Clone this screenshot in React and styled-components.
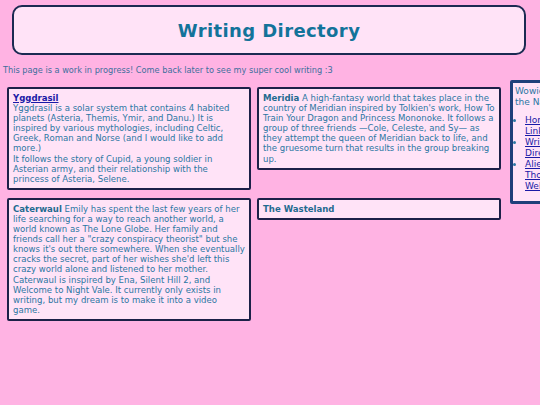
import React from 'react';
import styled, { createGlobalStyle } from 'styled-components';

const GlobalStyle = createGlobalStyle`
  html, body {
    margin: 0;
    padding: 0;
    overflow: hidden;
  }
  body {
    background-color: #ffb3e3;
    font-family: "DejaVu Sans", Verdana, sans-serif;
    color: #2b77a3;
  }
`;

const Page = styled.div`
  padding: 5px 0 0 3px;
  width: 600px;
`;

const Header = styled.header`
  margin: 0 0 0 9px;
  width: 510px;
  height: 46px;
  display: flex;
  align-items: center;
  justify-content: center;
  background-color: #ffe3f7;
  border: 2.5px solid #1b2a52;
  border-radius: 10px;

  h1 {
    margin: 0;
    font-size: 18px;
    font-weight: bold;
    letter-spacing: 0.4px;
    color: #13739a;
  }
`;

const Intro = styled.p`
  margin: 10px 0 0 0;
  font-size: 8.2px;
  line-height: 10px;
  color: #3d6f9c;
`;

const Main = styled.div`
  display: flex;
  align-items: flex-start;
  gap: 9px;
  margin-top: 5px;
`;

const Grid = styled.div`
  display: grid;
  grid-template-columns: 244px 244px;
  column-gap: 6px;
  row-gap: 8px;
  align-items: start;
  margin: 7px 0 0 4px;
`;

const Card = styled.div`
  background-color: #ffe3f7;
  border: 2px solid #1c2048;
  border-radius: 2px;
  padding: 4px 3px 4px 4px;
  font-size: 8.55px;
  line-height: 10.1px;

  p {
    margin: 0;
  }
`;

const Label = styled.b`
  color: #1f6b90;
`;

const TitleLink = styled.a`
  display: block;
  font-weight: bold;
  color: #1a1aa6;
  text-decoration: underline;
`;

const Aside = styled.aside`
  flex: none;
  width: 56px;
  background-color: #ffe3f7;
  border: 3px solid #1f3f7a;
  border-radius: 2px;
  padding: 3px 4px 9px 2px;
  font-size: 9px;
  line-height: 11px;

  p {
    margin: 0;
    white-space: nowrap;
  }

  ul {
    margin: 7px 0 0 0;
    padding-left: 10px;
  }

  a {
    color: #1a1aa6;
    text-decoration: underline;
  }
`;

export default function App() {
  return (
    <Page>
      <GlobalStyle />
      <Header>
        <h1>Writing Directory</h1>
      </Header>
      <Intro>This page is a work in progress! Come back later to see my super cool writing :3</Intro>
      <Main>
        <Grid>
          <Card>
            <TitleLink href="#">Yggdrasil</TitleLink>
            <p>
              Yggdrasil is a solar system that contains 4 habited planets (Asteria, Themis, Ymir, and Danu.) It is
              inspired by various mythologies, including Celtic, Greek, Roman and Norse (and I would like to add
              more.)
            </p>
            <p>
              It follows the story of Cupid, a young soldier in Asterian army, and their relationship with the
              princess of Asteria, Selene.
            </p>
          </Card>
          <Card>
            <p>
              <Label>Meridia</Label> A high-fantasy world that takes place in the country of Meridian inspired by
              Tolkien's work, How To Train Your Dragon and Princess Mononoke. It follows a group of three friends
              —Cole, Celeste, and Sy— as they attempt the queen of Meridian back to life, and the gruesome turn that
              results in the group breaking up.
            </p>
          </Card>
          <Card>
            <p>
              <Label>Caterwaul</Label> Emily has spent the last few years of her life searching for a way to reach
              another world, a world known as The Lone Globe. Her family and friends call her a "crazy conspiracy
              theorist" but she knows it's out there somewhere. When she eventually cracks the secret, part of her
              wishes she'd left this crazy world alone and listened to her mother. Caterwaul is inspired by Ena,
              Silent Hill 2, and Welcome to Night Vale. It currently only exists in writing, but my dream is to make
              it into a video game.
            </p>
          </Card>
          <Card>
            <p>
              <Label>The Wasteland</Label>
            </p>
          </Card>
        </Grid>
        <Aside>
          <p>Wowie! Here are the rest of<br />the Navigation pages:</p>
          <ul>
            <li><a href="#">Homepage Links</a></li>
            <li><a href="#">Writing Directory</a></li>
            <li><a href="#">Alien Thoughts Website</a></li>
          </ul>
        </Aside>
      </Main>
    </Page>
  );
}
